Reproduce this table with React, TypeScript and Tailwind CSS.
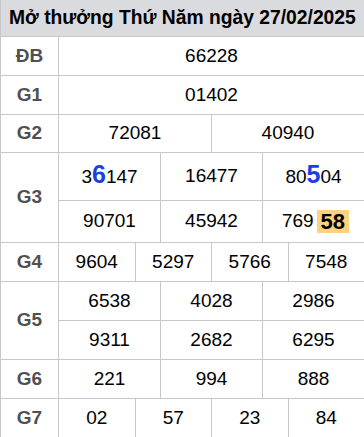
import React from "react";

const B = "border-[#c8c8c8]";

function Label({ children }: { children: React.ReactNode }) {
  return (
    <div className="w-[58px] shrink-0 border-r border-[#c8c8c8] flex items-center justify-center text-[19px] font-bold text-[#505050]">
      {children}
    </div>
  );
}

function Cells({ items, h, last }: { items: React.ReactNode[]; h: string; last?: boolean }) {
  return (
    <div className={`flex ${h} ${last ? "" : "border-b border-[#c8c8c8]"}`}>
      {items.map((it, i) => (
        <div
          key={i}
          className={`flex-1 basis-0 flex items-center justify-center text-[19px] text-black ${
            i < items.length - 1 ? "border-r border-[#c8c8c8]" : ""
          }`}
        >
          {it}
        </div>
      ))}
    </div>
  );
}

function Row({ label, children, h }: { label: string; children: React.ReactNode; h?: string }) {
  return (
    <div className={`flex border-b ${B} ${h ?? ""}`}>
      <Label>{label}</Label>
      <div className="flex-1 flex flex-col">{children}</div>
    </div>
  );
}

const Blue = ({ d }: { d: string }) => (
  <span className="text-[25px] font-bold text-[#1e3fe0] leading-none">{d}</span>
);

export default function App() {
  return (
    <div
      className="w-[364px] h-[437px] overflow-hidden bg-white border-l border-[#c8c8c8]"
      style={{ fontFamily: '"Liberation Sans", Arial, sans-serif' }}
    >
      <div className="h-[37px] bg-[#d9dbdf] border-b border-[#c8c8c8] flex items-center pl-[8px] text-[19.3px] font-bold text-black whitespace-nowrap">
        Mở thưởng Thứ Năm ngày 27/02/2025
      </div>
      <Row label="ĐB">
        <Cells h="h-[38px]" last items={["66228"]} />
      </Row>
      <Row label="G1">
        <Cells h="h-[38px]" last items={["01402"]} />
      </Row>
      <Row label="G2">
        <Cells h="h-[37px]" last items={["72081", "40940"]} />
      </Row>
      <Row label="G3">
        <Cells
          h="h-[48px]"
          items={[
            <span className="flex items-baseline">
              3<Blue d="6" />147
            </span>,
            "16477",
            <span className="flex items-baseline">
              80<Blue d="5" />04
            </span>,
          ]}
        />
        <Cells
          h="h-[41px]"
          last
          items={[
            "90701",
            "45942",
            <span className="flex items-center pl-[4px]">
              769
              <span className="ml-[3px] inline-block h-[23px] leading-[23px] px-[4px] bg-[#fdd27e] text-[22px] font-bold">
                58
              </span>
            </span>,
          ]}
        />
      </Row>
      <Row label="G4">
        <Cells h="h-[38px]" last items={["9604", "5297", "5766", "7548"]} />
      </Row>
      <Row label="G5">
        <Cells h="h-[39px]" items={["6538", "4028", "2986"]} />
        <Cells h="h-[38px]" last items={["9311", "2682", "6295"]} />
      </Row>
      <Row label="G6">
        <Cells h="h-[38px]" last items={["221", "994", "888"]} />
      </Row>
      <Row label="G7">
        <Cells h="h-[38px]" last items={["02", "57", "23", "84"]} />
      </Row>
    </div>
  );
}
